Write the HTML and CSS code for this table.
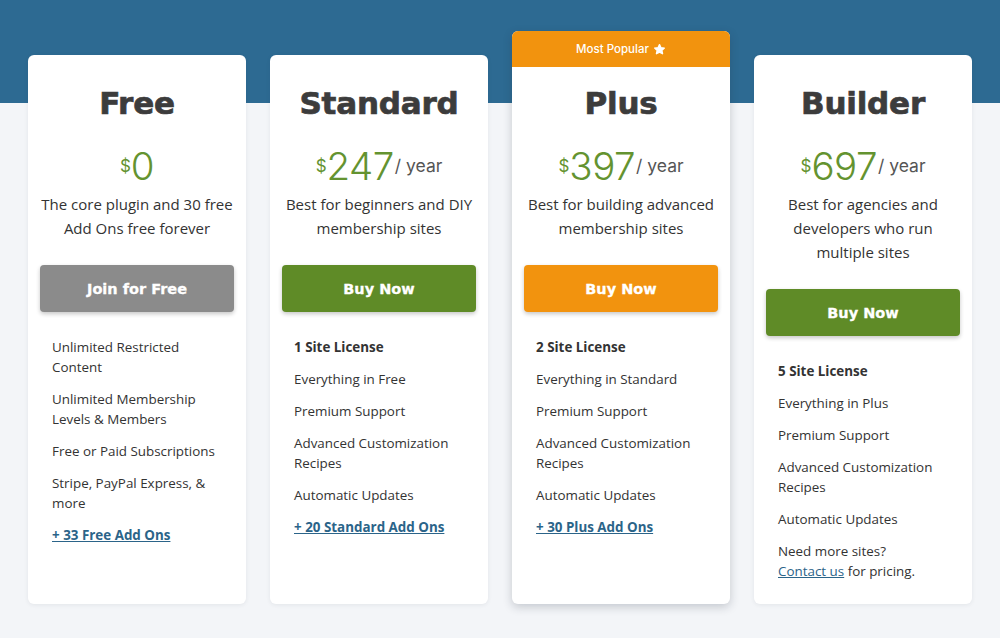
FILE: index.html
```html
<!DOCTYPE html>
<html lang="en">
<head>
<meta charset="utf-8">
<title>Pricing</title>
<link rel="stylesheet" href="styles.css">
</head>
<body>
<main class="page">
  <section class="plans">
    <article class="card">
      <div class="card-body">
        <h2 class="title">Free</h2>
        <div class="price"><span class="cur">$</span><span class="amt">0</span></div>
        <p class="desc">The core plugin and 30 free Add Ons free forever</p>
        <a class="btn btn-gray" href="#">Join for Free</a>
        <ul class="features">
          <li>Unlimited Restricted Content</li>
          <li>Unlimited Membership Levels &amp; Members</li>
          <li>Free or Paid Subscriptions</li>
          <li>Stripe, PayPal Express, &amp; more</li>
          <li><a class="addons" href="#">+ 33 Free Add Ons</a></li>
        </ul>
      </div>
    </article>

    <article class="card">
      <div class="card-body">
        <h2 class="title">Standard</h2>
        <div class="price"><span class="cur">$</span><span class="amt">247</span><span class="per">/ year</span></div>
        <p class="desc">Best for beginners and DIY membership sites</p>
        <a class="btn btn-green" href="#">Buy Now</a>
        <ul class="features">
          <li class="strong">1 Site License</li>
          <li>Everything in Free</li>
          <li>Premium Support</li>
          <li>Advanced Customization Recipes</li>
          <li>Automatic Updates</li>
          <li><a class="addons" href="#">+ 20 Standard Add Ons</a></li>
        </ul>
      </div>
    </article>

    <article class="card card-featured">
      <div class="ribbon">Most Popular
        <svg class="star" viewBox="0 0 24 24" aria-hidden="true"><polygon points="12,3 14.7,8.7 20.9,9.4 16.3,13.6 17.6,19.8 12,16.7 6.4,19.8 7.7,13.6 3.1,9.4 9.3,8.7" fill="#fff" stroke="#fff" stroke-width="2.6" stroke-linejoin="round"/></svg>
      </div>
      <div class="card-body">
        <h2 class="title">Plus</h2>
        <div class="price"><span class="cur">$</span><span class="amt">397</span><span class="per">/ year</span></div>
        <p class="desc">Best for building advanced membership sites</p>
        <a class="btn btn-orange" href="#">Buy Now</a>
        <ul class="features">
          <li class="strong">2 Site License</li>
          <li>Everything in Standard</li>
          <li>Premium Support</li>
          <li>Advanced Customization Recipes</li>
          <li>Automatic Updates</li>
          <li><a class="addons" href="#">+ 30 Plus Add Ons</a></li>
        </ul>
      </div>
    </article>

    <article class="card">
      <div class="card-body">
        <h2 class="title">Builder</h2>
        <div class="price"><span class="cur">$</span><span class="amt">697</span><span class="per">/ year</span></div>
        <p class="desc">Best for agencies and developers who run multiple sites</p>
        <a class="btn btn-green" href="#">Buy Now</a>
        <ul class="features">
          <li class="strong">5 Site License</li>
          <li>Everything in Plus</li>
          <li>Premium Support</li>
          <li>Advanced Customization Recipes</li>
          <li>Automatic Updates</li>
          <li>Need more sites?<br><a class="contact" href="#">Contact us</a> for pricing.</li>
        </ul>
      </div>
    </article>
  </section>
</main>
</body>
</html>
```

FILE: styles.css
```css
* { box-sizing: border-box; }

html, body {
  margin: 0;
  padding: 0;
}

body {
  background: #f3f5f8;
  font-family: "Open Sans", "Noto Sans", sans-serif;
  color: #333;
}

.page {
  min-height: 638px;
  background: linear-gradient(#2d6a92 0, #2d6a92 103px, #f3f5f8 103px);
  padding: 31px 28px 0;
}

.plans {
  display: flex;
  gap: 24px;
  align-items: stretch;
}

.card {
  width: 218px;
  flex: 0 0 218px;
  margin-top: 24px;
  background: #fff;
  border-radius: 6px;
  box-shadow: 0 1px 4px rgba(40, 50, 70, 0.08);
  display: flex;
  flex-direction: column;
}

.card-featured {
  margin-top: 0;
  box-shadow: 0 3px 10px rgba(30, 40, 60, 0.22);
}

.ribbon {
  height: 36px;
  background: #f2930e;
  color: #fff;
  border-radius: 6px 6px 0 0;
  display: flex;
  align-items: center;
  justify-content: center;
  gap: 4px;
  font-family: "Inter", "Noto Sans", sans-serif;
  font-size: 11.5px;
  font-weight: 500;
}

.star {
  width: 13px;
  height: 13px;
}

.card-body {
  padding: 26px 0 23px;
  display: flex;
  flex-direction: column;
  align-items: stretch;
}

.card-featured .card-body {
  padding-top: 14px;
}

.title {
  margin: 0;
  text-align: center;
  font-family: "DejaVu Sans", sans-serif;
  font-weight: 700;
  font-size: 31px;
  line-height: 44px;
  color: #3c3c3c;
  letter-spacing: -0.2px;
  -webkit-text-stroke: 0.7px #3c3c3c;
}

.price {
  margin-top: 22px;
  height: 38px;
  line-height: 38px;
  text-align: center;
  color: #649330;
  font-family: "Inter", sans-serif;
}

.cur {
  font-size: 17px;
  font-weight: 400;
  vertical-align: 8px;
  margin-right: 0;
}

.amt {
  font-size: 38.5px;
  font-weight: 300;
  letter-spacing: -0.5px;
}

.per {
  font-size: 17.5px;
  font-weight: 400;
  color: #555;
  vertical-align: 8px;
  margin-left: 1px;
}

.desc {
  margin: 7px 12px 0;
  text-align: center;
  font-size: 15px;
  line-height: 24px;
  color: #333;
}

.btn {
  display: flex;
  align-items: center;
  justify-content: center;
  margin: 25px 12px 0;
  height: 47px;
  border-radius: 4px;
  color: #fff;
  text-decoration: none;
  font-family: "DejaVu Sans", sans-serif;
  font-weight: 700;
  font-size: 14.5px;
  -webkit-text-stroke: 0.3px #fff;
  box-shadow: 0 2px 4px rgba(0, 0, 0, 0.22);
}

.btn-gray { background: #8b8b8b; }
.btn-green { background: #5f8b27; }
.btn-orange { background: #f2930e; }

.features {
  list-style: none;
  margin: 25px 24px 0;
  padding: 0;
  font-size: 13.4px;
  line-height: 20px;
  color: #333;
}

.features li + li {
  margin-top: 12px;
}

.features .strong {
  font-weight: 700;
}

.addons {
  color: #2b6489;
  font-weight: 700;
  text-decoration: underline;
}

.contact {
  color: #2b6489;
  text-decoration: underline;
}
```
